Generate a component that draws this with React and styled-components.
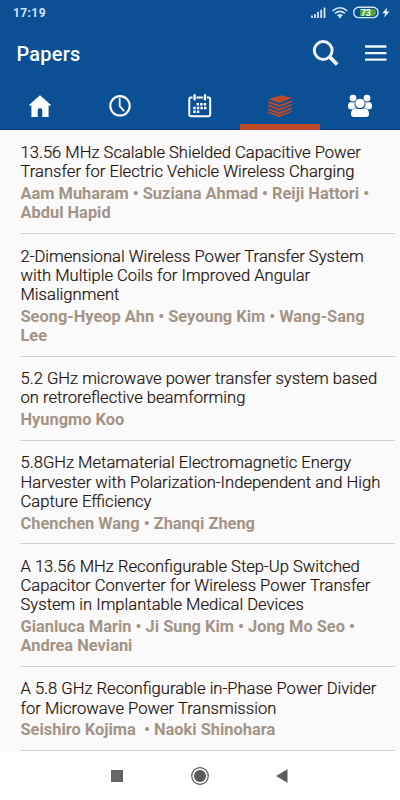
import React from "react";
import styled, { createGlobalStyle } from "styled-components";

const GlobalStyle = createGlobalStyle`
  * { box-sizing: border-box; }
  body { margin: 0; background: #fff; font-family: Roboto, "Liberation Sans", sans-serif; }
`;

const Screen = styled.div`
  width: 400px;
  height: 800px;
  display: flex;
  flex-direction: column;
  overflow: hidden;
  background: #fff;
`;

const Header = styled.header`
  flex: none;
  height: 130px;
  background: #0b4f95;
  border-bottom: 1px solid #073a78;
  color: #fff;
`;

const StatusBar = styled.div`
  height: 25px;
  padding: 0 10px 0 13px;
  display: flex;
  align-items: center;
  justify-content: space-between;
`;

const Clock = styled.span`
  font-size: 12px;
  font-weight: 700;
  letter-spacing: 0.4px;
  line-height: 25px;
  padding-top: 1px;
  color: #d3e6f8;
`;

const StatusIcons = styled.svg`
  width: 82px;
  height: 25px;
  display: block;
`;

const TitleBar = styled.div`
  height: 58px;
  padding: 0 13px 0 16.5px;
  display: flex;
  align-items: center;
  justify-content: space-between;
`;

const Title = styled.h1`
  margin: 0;
  font-size: 20px;
  font-weight: 500;
  line-height: 24px;
  letter-spacing: 0.2px;
`;

const Actions = styled.svg`
  width: 76px;
  height: 30px;
  display: block;
`;

const Tabs = styled.nav`
  height: 47px;
  display: grid;
  grid-template-columns: repeat(5, 80px);
`;

const Tab = styled.div`
  height: 47px;
  display: flex;
  justify-content: center;
  padding-top: 10px;
  color: ${(p) => (p.$active ? "#bd4b2b" : "#fff")};
  border-bottom: ${(p) => (p.$active ? "6px solid #bf4a29" : "0")};
`;

const TabIcon = styled.svg`
  width: 26px;
  height: 26px;
  display: block;
`;

const List = styled.main`
  flex: none;
  height: 623px;
  padding: 0.9px 5px 0 20px;
  background: #fafafa;
  overflow: hidden;
`;

const Item = styled.article`
  padding: 12.3px 0 10.7px 0.5px;
  border-bottom: 1px solid #d3d3d3;
  font-size: 16.4px;
  line-height: 19.2px;
  white-space: pre;
`;

const PaperTitle = styled.div`
  color: #24120c;
  font-size: 16.6px;
  font-weight: 300;
  -webkit-text-stroke: 0.2px #24120c;
`;

const Authors = styled.div`
  margin-top: 2.6px;
  color: #a39486;
  font-weight: 700;
`;

const NavBar = styled.footer`
  flex: 1;
  display: flex;
  justify-content: center;
  background: #fff;
`;

const NavIcons = styled.svg`
  width: 400px;
  height: 47px;
  display: block;
`;

const papers = [
  {
    title: ["13.56 MHz Scalable Shielded Capacitive Power", "Transfer for Electric Vehicle Wireless Charging"],
    authors: ["Aam Muharam • Suziana Ahmad • Reiji Hattori •", "Abdul Hapid"],
  },
  {
    title: ["2-Dimensional Wireless Power Transfer System", "with Multiple Coils for Improved Angular", "Misalignment"],
    authors: ["Seong-Hyeop Ahn • Seyoung Kim • Wang-Sang", "Lee"],
  },
  {
    title: ["5.2 GHz microwave power transfer system based", "on retroreflective beamforming"],
    authors: ["Hyungmo Koo"],
  },
  {
    title: ["5.8GHz Metamaterial Electromagnetic Energy", "Harvester with Polarization-Independent and High", "Capture Efficiency"],
    authors: ["Chenchen Wang • Zhanqi Zheng"],
  },
  {
    title: ["A 13.56 MHz Reconfigurable Step-Up Switched", "Capacitor Converter for Wireless Power Transfer", "System in Implantable Medical Devices"],
    authors: ["Gianluca Marin • Ji Sung Kim • Jong Mo Seo •", "Andrea Neviani"],
  },
  {
    title: ["A 5.8 GHz Reconfigurable in-Phase Power Divider", "for Microwave Power Transmission"],
    authors: ["Seishiro Kojima  • Naoki Shinohara"],
  },
];

const HomeIcon = () => (
  <TabIcon viewBox="0 0 26 26">
    <path fill="currentColor" d="M13 2.2 L24 12 L23 13 L21.6 12.1 V24 H15.3 V17.5 Q15.3 15 13 15 Q10.7 15 10.7 17.5 V24 H4.4 V12.1 L3 13 L2 12 Z" />
  </TabIcon>
);

const ClockIcon = () => (
  <TabIcon viewBox="0 0 26 26" fill="none" stroke="currentColor" strokeLinecap="round">
    <circle cx="13" cy="12.8" r="9.7" strokeWidth="2.1" />
    <path d="M12.7 6 V13.2 L16.7 17.6" strokeWidth="1.8" />
  </TabIcon>
);

const CalendarIcon = () => (
  <TabIcon viewBox="0 0 26 26" fill="none" stroke="currentColor">
    <path d="M5.5 4.6 H3.8 Q2.3 4.6 2.3 6.1 V21.8 Q2.3 23.2 3.8 23.2 H21.7 Q23.2 23.2 23.2 21.8 V6.1 Q23.2 4.6 21.7 4.6 H20 M9.5 4.6 H16" strokeWidth="2" />
    <path d="M7.6 2.2 V6.3 M18 2.2 V6.3" strokeWidth="2.4" strokeLinecap="round" />
    <path d="M9.5 11.3 H20 M6.2 15 H20 M6.2 18.8 H13" strokeWidth="2.4" strokeDasharray="2.5 1.1" />
  </TabIcon>
);

const StackIcon = () => (
  <TabIcon viewBox="0 0 26 26" fill="currentColor">
    <path d="M1.2 6.2 L14 2.2 L25 5 L12.5 9.8 Z" />
    <path d="M1.2 8 L12.5 11.9 L25 7.2 V9 L12.5 14 L1.2 10 Z" />
    <path d="M1.2 11.6 L12.5 15.5 L25 10.8 V12.6 L12.5 17.6 L1.2 13.6 Z" />
    <path d="M1.2 15.2 L12.5 19.1 L25 14.4 V16.2 L12.5 21.2 L1.2 17.2 Z" />
    <path d="M1.2 18.6 L12.5 22 L25 17.7 V18.8 L12.5 23.9 L1.2 20.3 Z" />
  </TabIcon>
);

const PeopleIcon = () => (
  <TabIcon viewBox="0 0 26 26" fill="currentColor">
    <circle cx="6" cy="5.1" r="3.4" />
    <circle cx="20" cy="5.1" r="3.4" />
    <circle cx="13" cy="10.4" r="4.7" />
    <path d="M7.6 9.1 Q6.7 12.6 8.8 14.8 Q7 15.1 5.8 16.3 H3.2 Q1 16 1 13.6 Q1 8.9 3.7 8.9 Q5.5 9.8 7.6 9.1 Z" />
    <path d="M18.4 9.1 Q19.3 12.6 17.2 14.8 Q19 15.1 20.2 16.3 H22.8 Q25 16 25 13.6 Q25 8.9 22.3 8.9 Q20.5 9.8 18.4 9.1 Z" />
    <path d="M9 15.2 Q13 17.4 17 15.2 Q22 15.4 22 21 Q22 24 19 24 H7 Q4 24 4 21 Q4 15.4 9 15.2 Z" />
  </TabIcon>
);

const tabs = [HomeIcon, ClockIcon, CalendarIcon, StackIcon, PeopleIcon];

export default function App() {
  return (
    <Screen>
      <GlobalStyle />
      <Header>
        <StatusBar>
          <Clock>17:19</Clock>
          <StatusIcons viewBox="308 0 82 25">
            <g fill="none" stroke="#d3e6f8">
              <path d="M312 18 V15.5 M315 18 V14 M318 18 V11.8 M321.2 18 V9.8 M324.5 18 V7.5" strokeWidth="1.8" />
              <path d="M332.5 11 Q340 4.5 347.2 11 M335 13.4 Q340 9.3 344.8 13.4 M337.4 15.8 Q340 13.8 342.3 15.8" strokeWidth="1.6" />
              <rect x="353.7" y="7.2" width="24.4" height="10.4" rx="5" strokeWidth="1.4" />
            </g>
            <circle cx="339.9" cy="17" r="1.2" fill="#d3e6f8" />
            <path d="M360 8.9 H372.5 A3.5 3.5 0 0 1 372.5 15.9 H360 Z" fill="#4aa33b" />
            <text x="365.8" y="15.8" textAnchor="middle" fontFamily="Roboto" fontWeight="700" fontSize="9" fill="#fff">73</text>
            <path d="M387.3 7.5 L382.2 13.2 H385.1 L384.2 17.6 L389.5 11.5 H386.5 Z" fill="#e5f2ff" />
          </StatusIcons>
        </StatusBar>
        <TitleBar>
          <Title>Papers</Title>
          <Actions viewBox="311 38.7 76 30" fill="none" stroke="#eef5fd">
            <circle cx="323.2" cy="50.2" r="8.9" strokeWidth="3" />
            <path d="M329.8 56.8 L337.2 64.2" strokeWidth="3.8" />
            <path d="M365 46.2 H386.5 M365 52.8 H386.5 M365 59.3 H386.5" strokeWidth="2.4" />
          </Actions>
        </TitleBar>
        <Tabs>
          {tabs.map((Icon, i) => (
            <Tab key={i} $active={i === 3}><Icon /></Tab>
          ))}
        </Tabs>
      </Header>
      <List>
        {papers.map((paper) => (
          <Item key={paper.title[0]}>
            <PaperTitle>{paper.title.join("\n")}</PaperTitle>
            <Authors>{paper.authors.join("\n")}</Authors>
          </Item>
        ))}
      </List>
      <NavBar>
        <NavIcons viewBox="0 753 400 47">
          <rect x="111" y="770" width="12" height="12" fill="#656565" />
          <circle cx="200" cy="776" r="8.3" fill="none" stroke="#555" strokeWidth="1.2" />
          <circle cx="200" cy="776" r="6" fill="#5c5c5c" />
          <path d="M276 776 L287.5 769.2 V782.8 Z" fill="#5c5c5c" />
        </NavIcons>
      </NavBar>
    </Screen>
  );
}
